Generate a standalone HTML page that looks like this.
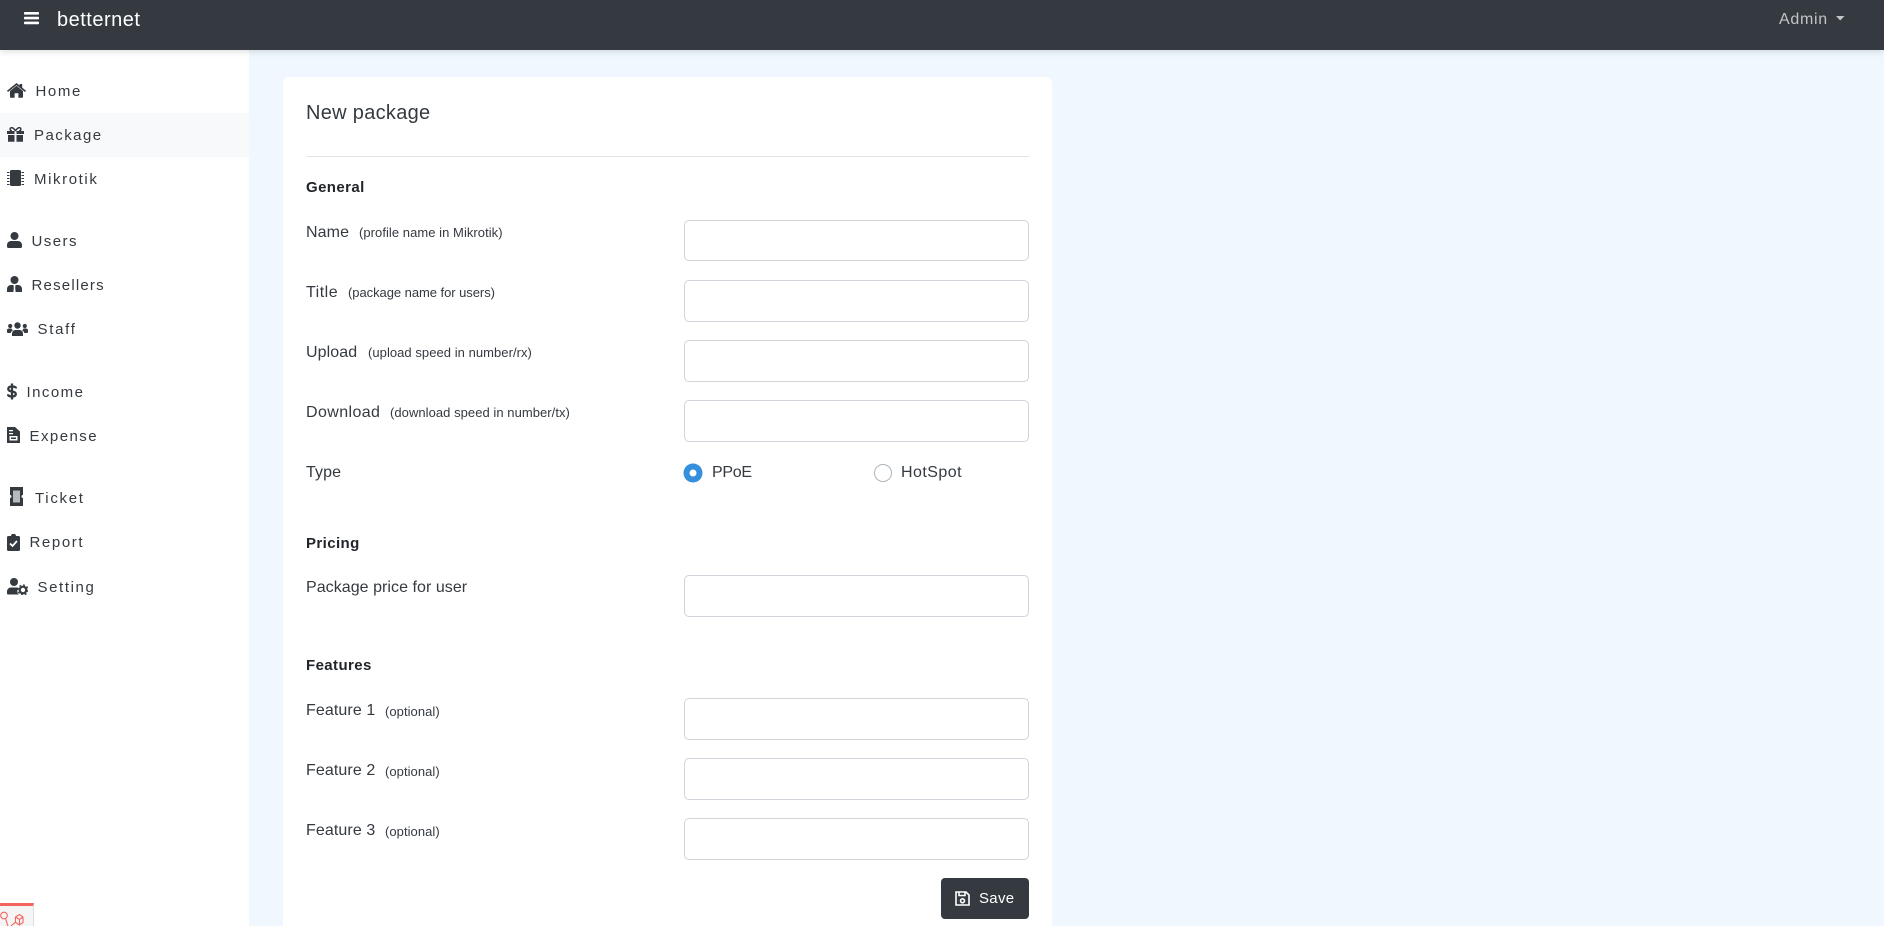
<!DOCTYPE html>
<html><head><meta charset="utf-8"><style>
*{box-sizing:border-box;margin:0;padding:0}
html,body{width:1884px;height:926px;overflow:hidden;background:#f0f7ff;font-family:"Liberation Sans",sans-serif;color:#212529}
.t{position:absolute;white-space:nowrap;line-height:20px;height:20px}
.nav{position:absolute;left:0;top:0;width:1884px;height:50px;background:#343a40;box-shadow:0 2px 6px rgba(0,0,0,.12)}
.side{position:absolute;left:0;top:50px;width:249px;height:876px;background:#fff}
.act{position:absolute;left:0;top:113px;width:249px;height:44px;background:#f8f9fa}
.card{position:absolute;left:283px;top:77px;width:769px;height:849px;background:#fff;border-radius:6px 6px 0 0}
.hr{position:absolute;left:306px;top:156px;width:723px;height:1px;background:#e3e5e8}
.in{position:absolute;left:684px;width:345px;height:42px;background:#fff;border:1px solid #d0d5dc;border-radius:5px}
.m{font-size:15px;letter-spacing:1.45px;color:#343a40}
.l{font-size:16px;letter-spacing:.1px;color:#343a40}
.s{font-size:13px;letter-spacing:.05px;color:#343a40}
.b{font-size:15px;font-weight:bold;letter-spacing:.4px;color:#212529}
svg{position:absolute;display:block}
</style></head><body>
<div class="side"></div><div class="act"></div>
<div class="nav"></div>
<svg style="left:24px;top:11px" width="16" height="14" fill="#fff"><rect y="1" width="15" height="2.6" rx=".8"/><rect y="5.8" width="15" height="2.6" rx=".8"/><rect y="10.6" width="15" height="2.6" rx=".8"/></svg>
<div class="t" style="left:57px;top:10px;font-size:20px;color:#fff;letter-spacing:.5px">betternet</div>
<div class="t" style="left:1779px;top:10px;font-size:16px;color:#c2c4c6;letter-spacing:.7px">Admin</div>
<svg style="left:1836px;top:16px" width="9" height="5" fill="#c2c4c6"><path d="M0 0h8.500L4.200 4.500z"/></svg>

<svg style="left:7px;top:83px" width="19" height="15" viewBox="0 0 19 15" fill="#343a40"><path d="M9.500 2.800 3 8v6a.7.7 0 0 0 .7.7H7.600V10.200h3.800v4.500h3.900a.7.7 0 0 0 .7-.7V8z"/><path d="M9.500 0 12.600 2.500V1h2.600v3.600L19 7.700 18 9 9.500 2.100 1 9 0 7.700z"/></svg>
<div class="t m" style="left:35.500px;top:82px;letter-spacing:1.600px">Home</div>
<svg style="left:7px;top:127px" width="17" height="15" viewBox="0 0 17 15" fill="#343a40"><path d="M0 4h7.500v3H0zM9.500 4H17v3H9.500zM1 8h6.500v6.700H1zM9.500 8H16v6.700H9.500z"/><path d="M8.500 4C7 1 5 .3 4 .8 2.600 1.500 3 4 5 4M8.500 4C10 1 12 .3 13 .8 14.400 1.500 14 4 12 4" fill="none" stroke="#343a40" stroke-width="1.500"/></svg>
<div class="t m" style="left:34px;top:126px">Package</div>
<svg style="left:7px;top:170px" width="17" height="16" viewBox="0 0 17 16" fill="#343a40"><rect x="3" y="0" width="11" height="16" rx="1.500"/><path d="M0 2h2.500v1H0zM0 5h2.500v1H0zM0 8h2.500v1H0zM0 11h2.500v1H0zM0 14h2.500v1H0zM14.500 2H17v1h-2.500zM14.500 5H17v1h-2.500zM14.500 8H17v1h-2.500zM14.500 11H17v1h-2.500zM14.500 14H17v1h-2.500z"/></svg>
<div class="t m" style="left:34px;top:170px;letter-spacing:1.600px">Mikrotik</div>

<svg style="left:7px;top:232px" width="15" height="16" viewBox="0 0 15 16" fill="#343a40"><circle cx="7.500" cy="4" r="4"/><path d="M0 14.500V13a4 4 0 0 1 4-4h7a4 4 0 0 1 4 4v1.500a1.500 1.500 0 0 1-1.500 1.500h-12A1.500 1.500 0 0 1 0 14.500z"/></svg>
<div class="t m" style="left:31.500px;top:232px">Users</div>
<svg style="left:7px;top:276px" width="15" height="16" viewBox="0 0 15 16" fill="#343a40"><circle cx="7.500" cy="4" r="4"/><path d="M0 16v-3a4 4 0 0 1 4-4h2.500l.3 3-.4 4zM15 16v-3a4 4 0 0 0-4-4H8.500l-.3 3 .4 4z"/></svg>
<div class="t m" style="left:31.500px;top:276px;letter-spacing:1.200px">Resellers</div>
<svg style="left:7px;top:322px" width="21" height="14" viewBox="0 0 21 14" fill="#343a40"><circle cx="10.500" cy="3.500" r="3.200"/><circle cx="3.200" cy="4" r="2.100"/><circle cx="17.800" cy="4" r="2.100"/><path d="M5 14v-2.500A3.500 3.500 0 0 1 8.500 8h4a3.500 3.500 0 0 1 3.500 3.500V14zM0 10v-1.500A2 2 0 0 1 2 6.500h2.500c.4 1 .8 1.300 1.500 1.800A5 5 0 0 0 3.600 11H1a1 1 0 0 1-1-1zM21 10V8.500a2 2 0 0 0-2-2h-2.500c-.4 1-.8 1.300-1.500 1.800a5 5 0 0 1 2.400 2.700H20a1 1 0 0 0 1-1z"/></svg>
<div class="t m" style="left:37.500px;top:320px;letter-spacing:1.700px">Staff</div>

<svg style="left:7px;top:383px" width="10" height="17" viewBox="0 0 10 17" fill="none" stroke="#343a40"><path d="M9 5.500C9 4 7.500 3.500 5 3.500S1.300 4.500 1.300 6 3 8.200 5 8.500 8.800 9.500 8.800 11 7.500 13.500 5 13.500 1 12.800 1 11.300" stroke-width="2.300"/><path d="M5 .5V16.500" stroke-width="2.300"/></svg>
<div class="t m" style="left:26.500px;top:383px">Income</div>
<svg style="left:7px;top:427px" width="13" height="16" viewBox="0 0 13 16" fill="#343a40"><path fill-rule="evenodd" d="M0 0h8l5 4.500V16H0zM2 3v1.200h4V3zM2 6v1.200h4V6zM2.500 9v4.500h8V9zM4 10.500h5V12H4z"/></svg>
<div class="t m" style="left:29.500px;top:427px">Expense</div>

<svg style="left:10px;top:487px" width="13" height="19" viewBox="0 0 13 19"><path fill="#343a40" d="M0 0h13v8a1.500 1.500 0 0 0 0 3v8H0v-8a1.500 1.500 0 0 0 0-3z"/><rect x="3" y="3.500" width="7" height="12" fill="#b5bbb8"/></svg>
<div class="t m" style="left:35px;top:489px;letter-spacing:1.700px">Ticket</div>
<svg style="left:7px;top:534px" width="13" height="17" viewBox="0 0 13 17" fill="#343a40"><path d="M1.500 2H4a2.500 2.500 0 0 1 5 0h2.500A1.500 1.500 0 0 1 13 3.500V15.500a1.500 1.500 0 0 1-1.500 1.500h-10A1.500 1.500 0 0 1 0 15.500V3.500A1.500 1.500 0 0 1 1.500 2z"/><path d="M3 9.500 5.500 12 10 7" fill="none" stroke="#fff" stroke-width="1.800"/></svg>
<div class="t m" style="left:29.500px;top:533px;letter-spacing:1.600px">Report</div>
<svg style="left:7px;top:578px" width="21" height="17" viewBox="0 0 21 17" fill="#343a40"><circle cx="7" cy="4" r="4"/><path d="M0 15.500V13.500A4 4 0 0 1 4 9.500h6.500a4 4 0 0 1 1 .2A6 6 0 0 0 11.500 16.500H1A1 1 0 0 1 0 15.500z"/><circle cx="16" cy="12" r="3.300" fill="none" stroke="#343a40" stroke-width="2.200"/><circle cx="16" cy="12" r="5" fill="none" stroke="#343a40" stroke-width="1.200" stroke-dasharray="2 1.900"/></svg>
<div class="t m" style="left:37.500px;top:578px;letter-spacing:1.600px">Setting</div>

<div style="position:absolute;left:0;top:903px;width:34px;height:23px;background:#f5f5f5;border-top:3px solid #f4645f;border-right:1px solid #ddd"></div>
<svg style="left:0;top:911px" width="26" height="15" viewBox="0 0 26 15" fill="none" stroke="#f4645f" stroke-width="1.100"><circle cx="4" cy="4.500" r="3.300"/><path d="M5.500 7.500 8 15M11 15 15.500 11M15.500 6 19.500 3.500 23 6V11.500L19.500 14 15.500 11.500V6ZM15.500 6 19.500 8.500 23 6M19.500 8.500V14"/></svg>

<div class="card"></div>
<div class="t" style="left:306px;top:103px;font-size:20px;letter-spacing:.3px;color:#343a40">New package</div>
<div class="hr"></div>
<div class="t b" style="left:306px;top:178px">General</div>

<div class="t l" style="left:306px;top:223px">Name</div><div class="t s" style="left:359px;top:223px">(profile name in Mikrotik)</div><div class="in" style="top:220px;height:41px"></div>
<div class="t l" style="left:306px;top:283px;letter-spacing:.5px">Title</div><div class="t s" style="left:348px;top:283px;letter-spacing:-.05px">(package name for users)</div><div class="in" style="top:280px"></div>
<div class="t l" style="left:306px;top:343px">Upload</div><div class="t s" style="left:368px;top:343px">(upload speed in number/rx)</div><div class="in" style="top:340px"></div>
<div class="t l" style="left:306px;top:403px;letter-spacing:.4px">Download</div><div class="t s" style="left:390px;top:403px">(download speed in number/tx)</div><div class="in" style="top:400px"></div>

<div class="t l" style="left:306px;top:463px">Type</div>
<svg style="left:683px;top:463px" width="20" height="20"><circle cx="10" cy="10" r="9.500" fill="#3490dc"/><circle cx="10" cy="10" r="3.500" fill="#fff"/></svg>
<div class="t l" style="left:712px;top:463px;letter-spacing:-.3px">PPoE</div>
<svg style="left:873px;top:463px" width="20" height="20"><circle cx="10" cy="10" r="8.500" fill="#fff" stroke="#adb5bd"/></svg>
<div class="t l" style="left:901px;top:463px;letter-spacing:.45px">HotSpot</div>

<div class="t b" style="left:306px;top:534px">Pricing</div>
<div class="t l" style="left:306px;top:578px;letter-spacing:.05px">Package price for user</div><div class="in" style="top:575px"></div>

<div class="t b" style="left:306px;top:656px">Features</div>
<div class="t l" style="left:306px;top:701px">Feature 1</div><div class="t s" style="left:385px;top:702px">(optional)</div><div class="in" style="top:698px"></div>
<div class="t l" style="left:306px;top:761px">Feature 2</div><div class="t s" style="left:385px;top:762px">(optional)</div><div class="in" style="top:758px"></div>
<div class="t l" style="left:306px;top:821px">Feature 3</div><div class="t s" style="left:385px;top:822px">(optional)</div><div class="in" style="top:818px"></div>

<div style="position:absolute;left:941px;top:878px;width:88px;height:41px;background:#343a40;border-radius:4px"></div>
<svg style="left:955px;top:891px" width="15" height="15" viewBox="0 0 15 15" fill="none" stroke="#fff" stroke-width="1.600"><path d="M1 1h10l3 3v10H1z"/><path d="M4 1.500v3h6v-3"/><circle cx="7.500" cy="9.800" r="2"/></svg>
<div class="t" style="left:979px;top:889px;font-size:15px;color:#fff;letter-spacing:.3px">Save</div>
</body></html>
